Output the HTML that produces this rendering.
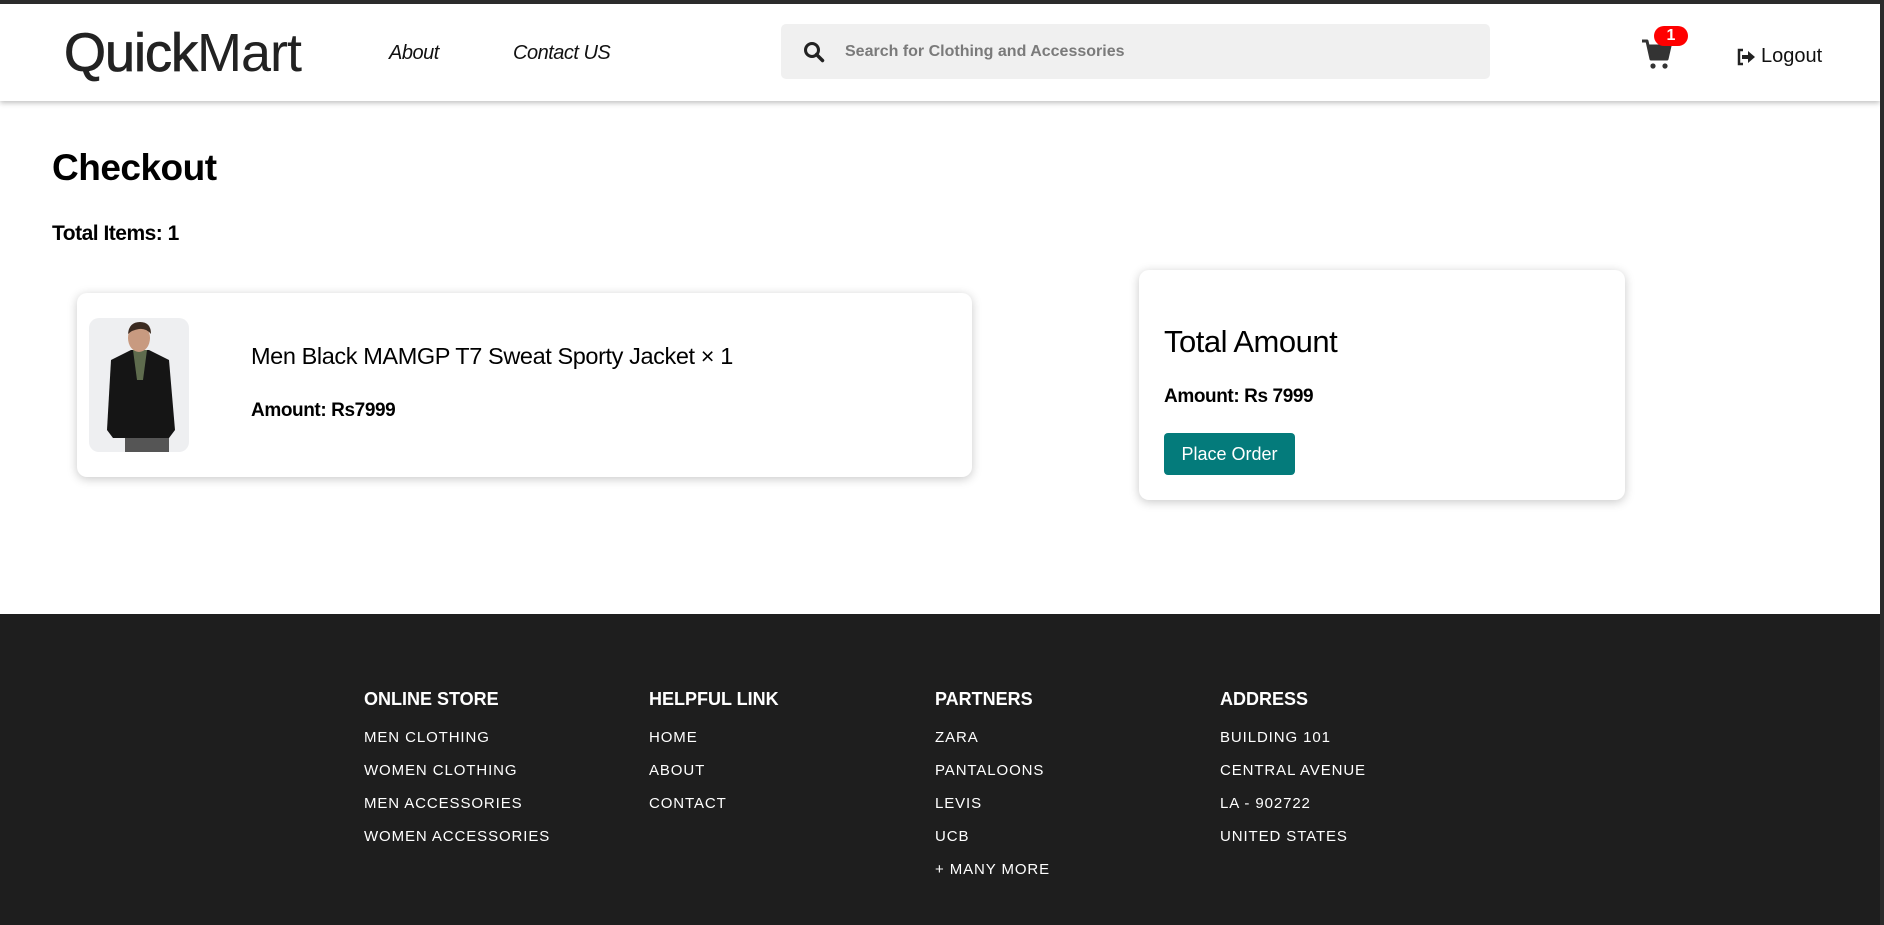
<!DOCTYPE html>
<html><head><meta charset="utf-8"><style>
*{margin:0;padding:0;box-sizing:border-box}
body{width:1884px;height:925px;overflow:hidden;background:#2b2b2b;font-family:"Liberation Sans",sans-serif;color:#000;position:relative}
#page{position:absolute;left:0;top:4px;width:1880px;height:921px;background:#fff;overflow:hidden}
.hdr{position:absolute;left:0;top:0;width:1880px;height:97px;background:#fff;box-shadow:0 2px 5px rgba(0,0,0,.25)}
.logo{position:absolute;left:64px;top:18px;font-size:54px;color:#222;letter-spacing:-1px}
.logo b{font-weight:normal}
.logo i{font-style:normal;-webkit-text-stroke:.8px #222}
.nav{position:absolute;top:38px;font-size:20px;font-style:italic;color:#111;letter-spacing:-.5px}
.search{position:absolute;left:781px;top:20px;width:709px;height:55px;background:#f0f0f0;border-radius:5px}
.search span{position:absolute;left:64px;top:19px;font-size:16px;color:#666;font-weight:bold;opacity:.85}
.abs{position:absolute}
h1{position:absolute;left:52px;top:143px;font-size:37px;font-weight:bold;letter-spacing:-.5px}
.ti{position:absolute;left:52px;top:218px;font-size:21px;font-weight:bold;letter-spacing:-.5px}
.card{position:absolute;background:#fff;border-radius:10px;box-shadow:0 2px 10px rgba(0,0,0,.22)}
.foot{position:absolute;left:0;top:610px;width:1880px;height:315px;background:#1e1e1e;color:#fff}
.col{position:absolute;top:75px}
.col h4{font-size:18px;font-weight:bold;margin-bottom:19px}
.col p{font-size:15px;letter-spacing:.9px;height:33px}
</style></head><body><div id="page">
<div class="hdr">
<div class="logo"><i>Quick</i><b>Mart</b></div>
<div class="nav" style="left:389px">About</div>
<div class="nav" style="left:513px">Contact US</div>
<div class="search">
<svg class="abs" style="left:22px;top:17px" width="22" height="22" viewBox="0 0 22 22"><circle cx="9" cy="9" r="6.5" fill="none" stroke="#222" stroke-width="3"/><path d="M13.5 13.5l6 6" stroke="#222" stroke-width="3.5" stroke-linecap="round"/></svg>
<span>Search for Clothing and Accessories</span></div>
<svg class="abs" style="left:1640px;top:32px" width="34" height="36" viewBox="0 0 34 36"><path d="M2 5h5l4 18h16l3-13H9" fill="none" stroke="#333" stroke-width="3" stroke-linejoin="round"/><path d="M9 10h21l-3 13H11z" fill="#333"/><circle cx="13" cy="30" r="2.6" fill="#333"/><circle cx="25" cy="30" r="2.6" fill="#333"/></svg>
<div class="abs" style="left:1654px;top:22px;width:34px;height:20px;border-radius:10px;background:#f00;color:#fff;font-size:16px;font-weight:bold;text-align:center;line-height:20px">1</div>
<svg class="abs" style="left:1736px;top:44px" width="20" height="18" viewBox="0 0 20 18"><path d="M7 2H3v14h4" fill="none" stroke="#222" stroke-width="2.5"/><path d="M6 7h6V3l7 6-7 6v-4H6z" fill="#222"/></svg>
<div class="abs" style="left:1761px;top:41px;font-size:20px;color:#111">Logout</div>
</div>
<h1>Checkout</h1>
<div class="ti">Total Items: 1</div>
<div class="card" style="left:77px;top:289px;width:895px;height:184px">
<svg class="abs" style="left:12px;top:25px;border-radius:10px" width="100" height="134" viewBox="0 0 100 134"><rect width="100" height="134" fill="#eeeff1"/><rect x="36" y="118" width="44" height="16" fill="#555"/><path d="M22 42l20-10h18l20 10 6 70-6 8H24l-6-8z" fill="#151515"/><path d="M44 32h14l-4 30h-6z" fill="#5e6b4d"/><ellipse cx="50" cy="20" rx="11" ry="14" fill="#c89a80"/><path d="M39 16q1-12 12-12t11 12q-5-6-12-5t-11 5z" fill="#3a2a20"/></svg>
<div class="abs" style="left:174px;top:50px;font-size:23.5px;letter-spacing:-.4px">Men Black MAMGP T7 Sweat Sporty Jacket × 1</div>
<div class="abs" style="left:174px;top:107px;font-size:19px;font-weight:bold;letter-spacing:-.4px">Amount: Rs7999</div>
</div>
<div class="card" style="left:1139px;top:266px;width:486px;height:230px">
<div class="abs" style="left:25px;top:54px;font-size:31px;letter-spacing:-.5px">Total Amount</div>
<div class="abs" style="left:25px;top:116px;font-size:19px;font-weight:bold;letter-spacing:-.4px">Amount: Rs 7999</div>
<div class="abs" style="left:25px;top:163px;width:131px;height:42px;background:#047b7b;border-radius:4px;color:#fff;font-size:18px;text-align:center;line-height:42px">Place Order</div>
</div>
<div class="foot">
<div class="col" style="left:364px"><h4>ONLINE STORE</h4><p>MEN CLOTHING</p><p>WOMEN CLOTHING</p><p>MEN ACCESSORIES</p><p>WOMEN ACCESSORIES</p></div>
<div class="col" style="left:649px"><h4>HELPFUL LINK</h4><p>HOME</p><p>ABOUT</p><p>CONTACT</p></div>
<div class="col" style="left:935px"><h4>PARTNERS</h4><p>ZARA</p><p>PANTALOONS</p><p>LEVIS</p><p>UCB</p><p>+ MANY MORE</p></div>
<div class="col" style="left:1220px"><h4>ADDRESS</h4><p>BUILDING 101</p><p>CENTRAL AVENUE</p><p>LA - 902722</p><p>UNITED STATES</p></div>
</div>
</div></body></html>
